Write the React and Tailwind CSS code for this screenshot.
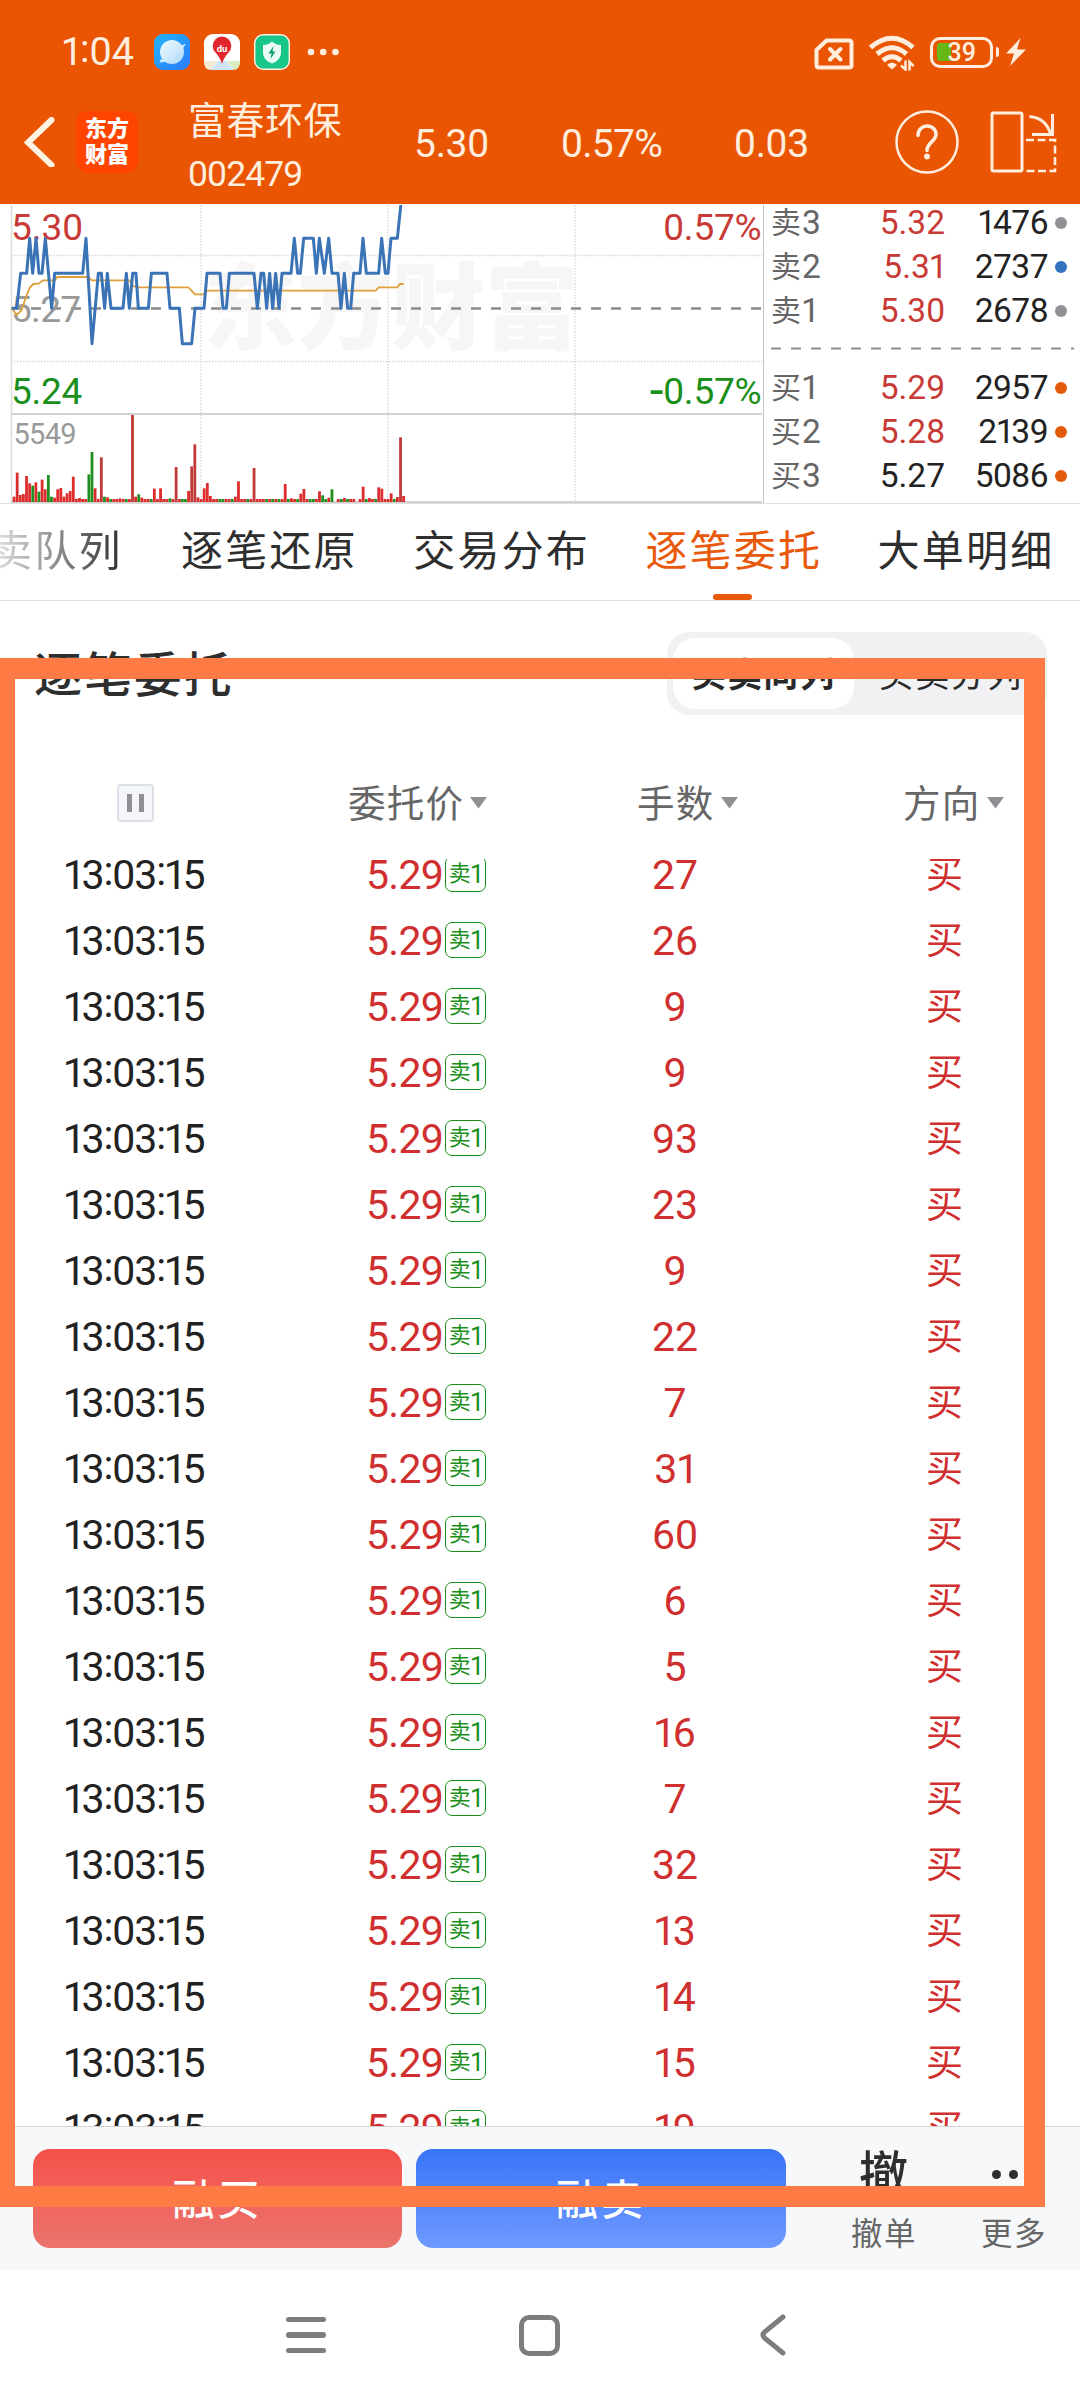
import React from "react";

/* Numerals: narrow "1" and vertically centred colon */
function Num({ children, className = "" }) {
  return (
    <span className={`whitespace-nowrap ${className}`}>
      {String(children)
        .split("")
        .map((c, i) => {
          if (c === "1") return <span key={i} className="-ml-[0.03em] -mr-[0.08em]">1</span>;
          if (c === ":") return <span key={i} className="relative -top-[0.08em]">:</span>;
          return c;
        })}
    </span>
  );
}

function StatusBar() {
  return (
    <div className="flex h-[104px] items-center pl-[62px] pr-[54px]">
      <Num className="w-[92px] text-[39.500px] leading-none">1:04</Num>
      <svg className="mr-[14px] h-9 w-9" viewBox="0 0 36 36">
        <defs>
          <linearGradient id="planet" x1="0" y1="0" x2="1" y2="1">
            <stop offset="0" stopColor="#22b4f8" />
            <stop offset="1" stopColor="#2a7bff" />
          </linearGradient>
          <linearGradient id="ball" x1="0" y1="0" x2="1" y2="1">
            <stop offset="0" stopColor="#f2fbff" />
            <stop offset="1" stopColor="#a9d8fb" />
          </linearGradient>
        </defs>
        <rect width="36" height="36" rx="9" fill="url(#planet)" />
        <circle cx="18" cy="18" r="12" fill="url(#ball)" />
        <path d="M28 11.500Q32.500 8.500 31.500 10.500Q27 18.500 17 24.500Q9 29 5.800 28.300Q5 27.500 7.500 24.500Q7.500 27.500 13 24.500Q23 19 28 11.500Z" fill="#cdeafd" />
      </svg>
      <svg className="mr-[14px] h-9 w-9" viewBox="0 0 36 36">
        <rect width="36" height="36" rx="9" fill="#fff" />
        <path d="M0 27H14L5 36Q0 35 0 27Z" fill="#f3ead0" />
        <path d="M22 27H36Q36 35 31 36Z" fill="#dcebc0" />
        <path d="M14 27H22L30 36H6Z" fill="#cfe5f7" />
        <path d="M18 30Q16.500 24 11.500 18.500A9.300 9.300 0 1 1 24.500 18.500Q19.500 24 18 30Z" fill="#e2262e" />
        <text x="18" y="17.500" fontSize="9.500" fontWeight="700" textAnchor="middle" fill="#fff">du</text>
      </svg>
      <svg className="h-9 w-9" viewBox="0 0 36 36">
        <rect x=".7" y=".7" width="34.600" height="34.600" rx="8.500" fill="#18c787" stroke="#fff3e0" strokeWidth="1.400" />
        <path d="M18 7.500Q22 11 27 11V19Q27 26 18 29.500Q9 26 9 19V11Q14 11 18 7.500Z" fill="#e9fbf4" />
        <path d="M19.500 12L14.500 19.500H17.500L16.500 25L21.500 17.500H18.500Z" fill="#129c6c" />
      </svg>
      <svg className="ml-[17px] h-2 w-8" viewBox="0 0 32 8">
        <circle cx="4" cy="4" r="3.300" fill="#ffeedd" />
        <circle cx="16.200" cy="4" r="3.300" fill="#ffeedd" />
        <circle cx="28.500" cy="4" r="3.300" fill="#ffeedd" />
      </svg>
      <div className="ml-auto flex items-center">
        <svg className="mr-[14px] mt-[3px] h-8 w-10" viewBox="0 0 40 32" fill="none" stroke="#ffeedd">
          <path d="M12.500 2.500H35Q37.500 2.500 37.500 5V27Q37.500 29.500 35 29.500H5Q2.500 29.500 2.500 27V12Z" strokeWidth="4" strokeLinejoin="round" />
          <path d="M16 11L26.500 21.500M26.500 11L16 21.500" strokeWidth="4" strokeLinecap="round" />
        </svg>
        <svg className="mr-[14px] mt-[2px] h-9 w-[48px]" viewBox="0 0 48 36" fill="none" stroke="#ffeedd">
          <path d="M2.500 12.500Q24-6 45 12.500M9 19Q24 6.500 38.500 19M15 25.500Q24 18 33 25.500" strokeWidth="5" />
          <path d="M24 34.500L19 30Q24 25 29 30Z" fill="#ffeedd" stroke="none" />
          <path d="M37.500 25.500V34.500L33 30.500M41.500 35.500V27L45.500 31" strokeWidth="2.500" />
        </svg>
        <div className="flex h-[31px] w-[63px] items-center rounded-[10px] border-[3px] border-[#ffeedd] p-[4px]">
          <div className="h-[18px] w-[14px] rounded-l-[3px] bg-[#67b817]" />
          <span className="-ml-[3px] text-[25px] font-medium leading-none">39</span>
        </div>
        <div className="ml-[3px] h-[10px] w-[3.500px] rounded-r bg-[#ffeedd]" />
        <svg className="ml-[7px] h-7 w-5" viewBox="0 0 20 28">
          <path d="M14.500 0L0 15.500H8L4 28L20 11.500H11Z" fill="#ffeedd" />
        </svg>
      </div>
    </div>
  );
}

function TitleBar() {
  return (
    <div className="flex h-[100px] pl-[24px]">
      <svg className="mt-[13px] h-[50px] w-[31px]" viewBox="0 0 31 50" fill="none" stroke="#fff3e2" strokeWidth="6">
        <path d="M27.500 3L4 25.500L27.500 48" strokeLinecap="round" />
      </svg>
      <div className="ml-[21px] mt-[7px] flex h-[62px] w-[62px] flex-col items-center justify-center rounded-[12px] bg-[#ff4400] text-[22px] font-black leading-[26px] text-white">
        <span>东方</span>
        <span>财富</span>
      </div>
      <div className="ml-[50px] w-[226px]">
        <div className="-mt-[5px] text-[38px] leading-[44px] tracking-[0.500px]">富春环保</div>
        <Num className="mt-[9px] block text-[35.500px] leading-[44px] tracking-[-0.900px]">002479</Num>
      </div>
      <Num className="mt-[20px] w-[147px] text-[39px] leading-[40px] tracking-[-0.300px]">5.30</Num>
      <Num className="mt-[20px] w-[173px] text-[39px] leading-[40px] tracking-[-0.700px]">0.57%</Num>
      <Num className="mt-[20px] w-[160px] text-[39px] leading-[40px] tracking-[-0.300px]">0.03</Num>
      <svg className="mt-[6px] h-[64px] w-[66px]" viewBox="0 0 66 64" fill="none" stroke="#ffeedd">
        <circle cx="33" cy="32" r="30.500" strokeWidth="2.500" />
        <path d="M24 25.500C24 13 42 13 42 24.500C42 31 33 32.500 33 40.500" strokeWidth="3.600" strokeLinecap="round" />
        <circle cx="33" cy="46.500" r="2.900" fill="#ffeedd" stroke="none" />
      </svg>
      <svg className="ml-[30px] mt-[6px] h-[64px] w-[68px]" viewBox="0 0 68 64" fill="none" stroke="#ffeedd" strokeWidth="3">
        <rect x="2" y="3" width="30" height="58" rx="1.500" />
        <path d="M39.500 6.500Q56 8 60.500 24" />
        <path d="M62.500 4V24.500H42" />
        <path d="M36 30H65V61H36" strokeWidth="2.600" strokeDasharray="8 3.500" />
      </svg>
    </div>
  );
}

const PRICE_LINE =
  "36,325 50,325 62,220 80,220 89,115 98,220 108,115 117,220 126,220 136,115 155,325 164,220 248,220 258,115 276,431 295,220 304,220 314,325 322,220 333,325 369,325 379,220 388,325 398,220 408,220 415,325 445,325 454,220 501,220 510,325 538,325 547,431 575,431 585,325 612,325 621,220 660,220 669,325 679,325 688,220 762,220 772,325 783,220 791,220 800,325 809,220 818,325 827,220 837,325 846,220 873,220 883,115 893,220 901,220 911,115 940,115 949,220 958,115 973,220 986,115 996,220 1014,220 1023,325 1033,220 1043,325 1052,325 1061,220 1080,220 1089,115 1099,220 1136,220 1145,115 1156,220 1164,220 1173,115 1192,115 1203,10";
const AVG_LINE =
  "36,325 50,345 65,330 80,285 90,262 100,252 118,250 128,241 164,241 172,231 265,231 275,241 388,241 400,258 412,262 565,262 585,283 612,283 620,272 1127,272 1136,262 1192,262 1200,252 1211,252";

/* Volume heights by minute; minutes not listed hold the minimum height */
const VOLUME = {
  0: 16, 1: 88, 2: 21, 3: 24, 4: 78, 5: 56, 6: 49, 7: 59, 8: 31, 9: 67, 10: 38, 11: 81, 12: 16, 13: 13, 14: 38, 15: 42,
  16: 16, 17: 26, 18: 33, 19: 76, 21: 12, 24: 83, 25: 150, 26: 41, 28: 134, 29: 16, 30: 14, 34: 11, 38: 261, 39: 16, 40: 23,
  41: 13, 45: 40, 47: 41, 50: 11, 52: 105, 56: 33, 57: 107, 58: 173, 59: 14, 61: 41, 62: 57, 63: 18, 71: 16, 72: 62, 77: 102,
  87: 54, 89: 11, 92: 25, 93: 39, 98: 32, 99: 20, 101: 13, 102: 38, 103: 0, 106: 12, 110: 0, 112: 46, 114: 12, 117: 44,
  118: 40, 121: 26, 123: 15, 124: 194, 125: 18,
};
const GREEN = [6, 8, 11, 12, 24, 25, 29, 31, 36, 40, 44, 50, 54, 55, 66, 67, 70, 75, 81, 83, 85, 88, 91, 95, 96, 99, 100, 102, 105, 107, 113, 116, 122];

function Chart() {
  return (
    <svg className="h-[299px] w-[765px] shrink-0" viewBox="0 205 765 299">
      <text x="203" y="342" fontSize="94" fontWeight="900" fill="#f6f6f6">东方财富</text>
      <g stroke="#d6d6d6" strokeWidth="1.300" strokeDasharray="1.500 1.500" fill="none">
        <path d="M11 255.500H762M11 361.500H762M201 205V502M388 205V502M575 205V502" />
      </g>
      <path d="M11.500 205V503" stroke="#dcdcdc" strokeWidth="1.500" />
      <path d="M763.500 205V503" stroke="#c4c4c4" strokeWidth="1" />
      <path d="M11 414H762M11 502H762" stroke="#d2d2d2" strokeWidth="2" />
      <path d="M11 308.500H762" stroke="#8a8a8a" strokeWidth="2.300" strokeDasharray="10 10" />
      <g fontSize="37">
        <text x="11" y="240" fill="#c83a35">5.30</text>
        <text x="11" y="322" fill="#999" letterSpacing="-.7">5.27</text>
        <text x="11" y="404" fill="#1b8f1b" letterSpacing="-.3">5.24</text>
        <text x="761.500" y="240" fill="#c83a35" textAnchor="end" letterSpacing="-.2">0.57%</text>
        <text x="761.500" y="404" fill="#1b8f1b" textAnchor="end" letterSpacing="-.2">
          <tspan fontSize="50" dy="3">-</tspan><tspan dy="-3">0.57%</tspan>
        </text>
      </g>
      <text x="13.500" y="444" fontSize="29" fill="#999" letterSpacing="-.7">5549</text>
      <g transform="translate(0 200) scale(.33333)">
        <polyline points={AVG_LINE} fill="none" stroke="#df9f3c" strokeWidth="5.500" />
        <polyline points={PRICE_LINE} fill="none" stroke="#3b74b6" strokeWidth="9" strokeLinejoin="round" />
        {Array.from({ length: 126 }, (_, i) => {
          const h = VOLUME[i] ?? 9;
          return <rect key={i} x={38 + 9.35 * i} y={906 - h} width="8.4" height={h} fill={GREEN.includes(i) ? "#1f8f1f" : h > 90 ? "#c03a38" : "#dc2c2c"} />;
        })}
      </g>
    </svg>
  );
}

const SELLS = [
  ["卖3", "5.32", "1476", "bg-[#909094]"],
  ["卖2", "5.31", "2737", "bg-[#3372bd]"],
  ["卖1", "5.30", "2678", "bg-[#909094]"],
];
const BUYS = [
  ["买1", "5.29", "2957", "bg-[#e35a0b]"],
  ["买2", "5.28", "2139", "bg-[#e35a0b]"],
  ["买3", "5.27", "5086", "bg-[#e35a0b]"],
];

function BookRow({ row: [label, price, volume, dot] }) {
  return (
    <div className="flex h-11 items-center text-[33.500px] leading-none text-[#222]">
      <div className="flex w-[70px] items-center text-[#666]">
        <span className="text-[30px]">{label[0]}</span>
        <Num className="ml-[1px]">{label[1]}</Num>
      </div>
      <Num className={`w-[104px] text-right ${price === "5.27" ? "" : "text-[#c83a35]"}`}>{price}</Num>
      <Num className="w-[103px] text-right tracking-[-0.500px]">{volume}</Num>
      <div className={`ml-[7px] h-3 w-3 rounded-full ${dot}`} />
    </div>
  );
}

function OrderBook() {
  return (
    <div className="-mt-[4px] flex-1 pl-[6px]">
      {SELLS.map((r) => <BookRow key={r[0]} row={r} />)}
      <svg className="h-[33px] w-[303px]" viewBox="0 0 303 33">
        <path d="M0 15.500H303" stroke="#8c8c8c" strokeWidth="2" strokeDasharray="10 10" />
      </svg>
      {BUYS.map((r) => <BookRow key={r[0]} row={r} />)}
    </div>
  );
}

function Tabs() {
  return (
    <div className="flex h-[97px] overflow-hidden border-b border-[#dedede] text-[42px] leading-[96px] tracking-[2.200px] text-[#2e2e2e]">
      <div className="w-[181px] shrink-0 whitespace-nowrap">
        <span className="-ml-[10px] bg-gradient-to-r from-[#e8e8e8] via-[#8f8f8f] to-[#2e2e2e] bg-clip-text text-transparent">卖队列</span>
      </div>
      {["逐笔还原", "交易分布", "逐笔委托", "大单明细"].map((t) => (
        <div key={t} className={`flex w-[232.200px] shrink-0 flex-col ${t === "逐笔委托" ? "text-[#e8590c]" : ""}`}>
          <span className="h-[90px]">{t}</span>
          {t === "逐笔委托" && <div className="ml-[68px] h-[6px] w-[39px] rounded-full bg-[#e8590c]" />}
        </div>
      ))}
    </div>
  );
}

function SortHead({ label, className }) {
  return (
    <div className={`flex items-center ${className}`}>
      <span className="pt-[3px] tracking-[1.300px]">{label}</span>
      <svg className="ml-[6px] h-[12px] w-[17px]" viewBox="0 0 17 12">
        <path d="M0 0H17L8.500 11.500Z" fill="#909094" />
      </svg>
    </div>
  );
}

const LOTS = [27, 26, 9, 9, 93, 23, 9, 22, 7, 31, 60, 6, 5, 16, 7, 32, 13, 14, 15, 19];

function Orders() {
  return (
    <section className="flex h-[1525px] flex-col">
      <div className="flex h-[146px] justify-between pl-[34px] pr-[33px] pt-[31px]">
        <h2 className="mt-[9px] text-[48px] font-medium leading-[70px] tracking-[1.900px] text-[#2e2e2e]">逐笔委托</h2>
        <div className="flex h-[83px] w-[380px] items-center rounded-[22px] bg-[#f1f1f4] pl-[6px] text-[34.500px] leading-none tracking-[1.400px] text-[#2a2a2a]">
          <div className="flex h-[71px] w-[181px] items-center justify-center rounded-[22px] bg-white pt-[3px] font-bold">买卖同列</div>
          <div className="flex-1 pl-[25px] pt-[3px]">买卖分列</div>
        </div>
      </div>
      <div className="flex h-[112px] items-center text-[37.500px] leading-none text-[#666]">
        <div className="ml-[117px] flex h-[38px] w-[37px] items-center justify-center gap-[6.500px] rounded-[4px] border-2 border-[#dcdfe5] bg-[#f5f6f9]">
          <div className="h-[18px] w-[5.500px] bg-[#909094]" />
          <div className="h-[18px] w-[5.500px] bg-[#909094]" />
        </div>
        <SortHead label="委托价" className="ml-[194px] w-[289px]" />
        <SortHead label="手数" className="w-[266px]" />
        <SortHead label="方向" className="" />
      </div>
      <div className="flex-1 overflow-hidden">
        <div className="-mt-[17px]">
          {LOTS.map((n, i) => (
            <div key={i} className="flex h-[66px] items-center text-[41px] leading-none text-[#d02f2f]">
              <Num className="ml-[64px] w-[302px] tracking-[-1.100px] text-[#222]">13:03:15</Num>
              <Num className="w-[79px] tracking-[-0.700px]">5.29</Num>
              <div className="-mt-[2px] flex h-[36px] w-[41px] items-center justify-center rounded-[7px] border border-[#1b8f1b] text-[22px] text-[#1b8f1b]">
                卖<Num className="text-[25px]">1</Num>
              </div>
              <div className="ml-[89px] w-[200px] text-center"><Num>{n}</Num></div>
              <div className="ml-[151px] pt-px text-[37px]">买</div>
            </div>
          ))}
        </div>
      </div>
    </section>
  );
}

function ActionBar() {
  return (
    <div className="flex h-[144px] border-t border-[#d2d2d2] bg-[#f7f8fa] pl-[33px] pt-[22px]">
      <button className="h-[99px] w-[369px] rounded-[17px] bg-gradient-to-b from-[#f55049] to-[#ea746d] pt-[4px] text-[42px] font-medium tracking-[3px] text-white">融买</button>
      <button className="ml-[14px] h-[99px] w-[370px] rounded-[17px] bg-gradient-to-b from-[#3974f8] to-[#6e99ff] pt-[4px] text-[42px] font-medium tracking-[3px] text-white">融卖</button>
      <div className="ml-[49px] flex w-[98px] flex-col items-center text-[#2e2e2e]">
        <span className="mr-[1px] mt-[2px] text-[49px] font-medium leading-[50px]">撤</span>
        <span className="mt-[14px] text-[31.500px] leading-[40px] tracking-[1.500px] text-[#666]">撤单</span>
      </div>
      <div className="ml-[32px] flex w-[98px] flex-col items-center text-[#2e2e2e]">
        <div className="mt-[2px] flex h-[46px] items-center gap-[8px] pr-[2px]">
          <i className="h-[9px] w-[9px] rounded-full bg-[#2e2e2e]" />
          <i className="h-[9px] w-[9px] rounded-full bg-[#2e2e2e]" />
          <i className="h-[9px] w-[9px] rounded-full bg-[#2e2e2e]" />
        </div>
        <span className="mt-[18px] text-[31.500px] leading-[40px] tracking-[1.500px] text-[#666]">更多</span>
      </div>
    </div>
  );
}

function SystemNav() {
  return (
    <div className="flex h-[130px] items-center bg-white pl-[286px]">
      <div className="flex w-[40px] flex-col gap-[10px]">
        <div className="h-[5.500px] rounded-full bg-[#7d7d7d]" />
        <div className="h-[5.500px] rounded-full bg-[#7d7d7d]" />
        <div className="h-[5.500px] rounded-full bg-[#7d7d7d]" />
      </div>
      <div className="ml-[193px] h-[41px] w-[41px] rounded-[10px] border-[5px] border-[#7d7d7d]" />
      <svg className="ml-[200px] h-[42px] w-[26px]" viewBox="0 0 26 42" fill="none" stroke="#7d7d7d" strokeWidth="5">
        <path d="M23 3L4.500 18Q1.500 21 4.500 24L23 39" strokeLinecap="round" />
      </svg>
    </div>
  );
}

export default function App() {
  return (
    <div className="relative flex h-[2400px] w-[1080px] flex-col overflow-hidden bg-white font-[Roboto,'Noto_Sans_CJK_SC',sans-serif]">
      <header className="h-[204px] shrink-0 bg-[#e95502] text-[#ffeedd]">
        <StatusBar />
        <TitleBar />
      </header>
      <div className="flex h-[300px] shrink-0 overflow-hidden border-b border-[#dedede] pt-px">
        <Chart />
        <OrderBook />
      </div>
      <Tabs />
      <Orders />
      <ActionBar />
      <SystemNav />
      <div className="pointer-events-none absolute -left-[6px] top-[658px] h-[1549px] w-[1051px] border-[21px] border-[#ff7b46]" />
    </div>
  );
}
